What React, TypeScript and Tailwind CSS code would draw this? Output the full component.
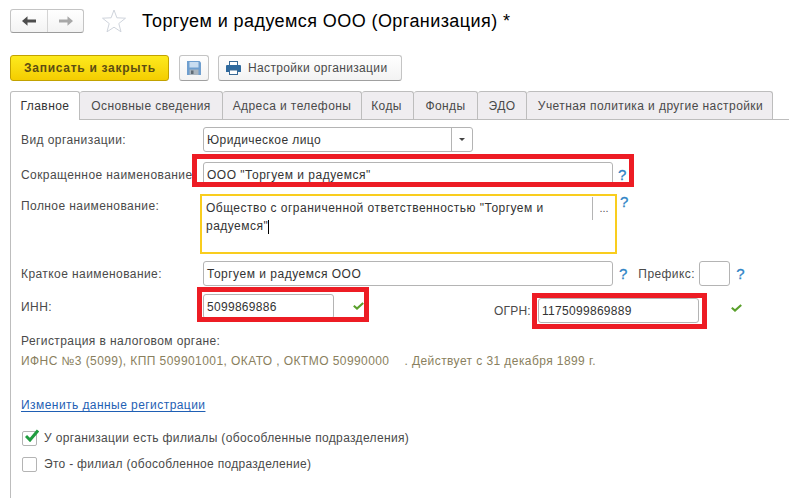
import React from "react";

const Help = ({ className = "" }: { className?: string }) => (
  <span className={"text-[15px] leading-none text-[#2f84c6] [-webkit-text-stroke:0.3px_#2f84c6] " + className}>?</span>
);

const Check = ({ className = "" }: { className?: string }) => (
  <svg width="11" height="8" viewBox="0 0 11 8" className={className}>
    <path d="M0.8 3.8 L4 6.6 L10.2 1" fill="none" stroke="#5aa02c" strokeWidth="2.1" />
  </svg>
);

const Field = ({ className = "", children }: { className?: string; children?: React.ReactNode }) => (
  <div className={"h-[25px] border border-[#b4b4b4] rounded-[3px] bg-white flex items-center pl-[3px] text-[12px] tracking-[0.5px] text-[#333] " + className}>
    {children}
  </div>
);

const Label = ({ className = "", children }: { className?: string; children: React.ReactNode }) => (
  <div className={"w-[182px] shrink-0 whitespace-nowrap text-[12px] tracking-[0.42px] text-[#4a4a4a] " + className}>{children}</div>
);

const tabs = [
  { t: "Основные сведения", w: "w-[143px]", x: "" },
  { t: "Адреса и телефоны", w: "w-[139px]", x: "" },
  { t: "Коды", w: "w-[52px]", x: "pr-[2px]" },
  { t: "Фонды", w: "w-[64px]", x: "" },
  { t: "ЭДО", w: "w-[49px]", x: "" },
  { t: "Учетная политика и другие настройки", w: "w-[246px]", x: "pl-[2px]" },
];

export default function App() {
  return (
    <div className="relative w-[789px] h-[498px] overflow-hidden bg-white font-['Liberation_Sans',Arial,sans-serif]">
      {/* Header */}
      <div className="flex items-center h-[24px] mt-[9px] ml-[10px]">
        <div className="flex w-[74px] h-[24px] border border-[#c4c4c4] border-b-[#9c9c9c] rounded-[3px] bg-gradient-to-b from-white to-[#f3f3f3]">
          <div className="w-[37px] border-r border-[#d4d4d4] flex items-center justify-center">
            <svg width="14" height="10" viewBox="0 0 14 10">
              <path d="M0 5 L5.5 0.3 V3.4 H14 V6.6 H5.5 V9.7 Z" fill="#4d4d4d" />
            </svg>
          </div>
          <div className="flex-1 flex items-center justify-center">
            <svg width="14" height="10" viewBox="0 0 14 10">
              <path d="M14 5 L8.5 0.3 V3.4 H0 V6.6 H8.5 V9.7 Z" fill="#a8a8a8" />
            </svg>
          </div>
        </div>
        <svg width="24" height="24" viewBox="0 0 24 24" className="ml-[18px]">
          <path d="M12 1 L14.9 8.8 L23.5 9.2 L16.8 14.5 L19 22.8 L12 18.2 L5 22.8 L7.2 14.5 L0.5 9.2 L9.1 8.8 Z" fill="none" stroke="#cfd4dc" strokeWidth="1" />
        </svg>
        <div className="ml-[16px] text-[18px] text-black whitespace-nowrap tracking-[0.42px]">Торгуем и радуемся ООО (Организация) *</div>
      </div>

      {/* Toolbar */}
      <div className="flex items-stretch h-[26px] mt-[22px] ml-[10px]">
        <div className="w-[159px] pl-[1px] rounded-[3px] border border-[#c2a200] bg-gradient-to-b from-[#fdea1c] to-[#f4cd00] flex items-center justify-center text-[12px] font-bold tracking-[0.72px] text-[#5c4d12]">
          Записать и закрыть
        </div>
        <div className="ml-[10px] w-[30px] rounded-[3px] border border-[#c4c4c4] border-b-[#a0a0a0] bg-gradient-to-b from-white to-[#f3f3f3] flex items-center justify-center">
          <svg width="14" height="14" viewBox="0 0 14 14">
            <path d="M0 0 H12.5 L14 1.5 V14 H0 Z" fill="#6f9fcf" />
            <rect x="2.5" y="1" width="9" height="5.5" fill="#c9ddf0" />
            <rect x="2.5" y="8.5" width="9" height="5.5" fill="#a9b4bd" />
            <rect x="4" y="9.5" width="2.5" height="3.5" fill="#5f6b75" />
          </svg>
        </div>
        <div className="ml-[9px] w-[184px] rounded-[3px] border border-[#c4c4c4] border-b-[#a0a0a0] bg-gradient-to-b from-white to-[#f3f3f3] flex items-center pl-[7px] text-[12px] tracking-[0.35px] text-[#4a4a4a]">
          <svg width="15" height="14" viewBox="0 0 15 14" className="mr-[7px]">
            <rect x="3.5" y="0.5" width="8" height="5" fill="#fff" stroke="#3a6a96" />
            <path d="M0 5 Q0 4 1 4 H14 Q15 4 15 5 V11 H12 V9 H3 V11 H0 Z" fill="#2f6a9e" />
            <rect x="3.5" y="9" width="8" height="4.5" fill="#fff" stroke="#3a6a96" />
          </svg>
          Настройки организации
        </div>
      </div>

      {/* Tabs */}
      <div className="flex items-end h-[29px] mt-[10px] ml-[10px] border-b border-[#bdbdbd] relative">
        <div className="w-[70px] h-[29px] -mb-px border border-b-0 border-[#bdbdbd] rounded-t-[3px] bg-white flex items-center justify-center text-[12px] tracking-[0.42px] text-[#333]">
          Главное
        </div>
        {tabs.map((x) => (
          <div key={x.t} className={x.w + " " + x.x + " h-[28px] border-r border-t border-[#bdbdbd] rounded-t-[3px] bg-[#efedf0] flex items-center justify-center text-[12px] tracking-[0.42px] text-[#4a4a4a] whitespace-nowrap"}>
            {x.t}
          </div>
        ))}
      </div>

      {/* Form */}
      <div className="ml-[10px] h-[378px] border-l border-[#bdbdbd] pl-[10px] pt-[7px]">
        <div className="flex items-center h-[25px]">
          <Label>Вид организации:</Label>
          <Field className="w-[270px] pr-0 !tracking-[0.42px]">
            <span className="flex-1">Юридическое лицо</span>
            <span className="w-[21px] h-full border-l border-[#b4b4b4] flex items-center justify-center">
              <span className="w-0 h-0 border-x-[3px] border-x-transparent border-t-[3px] border-t-[#444]" />
            </span>
          </Field>
        </div>

        <div className="flex items-center h-[25px] mt-[10px]">
          <Label>Сокращенное наименование</Label>
          <Field className="w-[410px]">ООО "Торгуем и радуемся"</Field>
          <Help className="ml-[5px]" />
        </div>

        <div className="flex items-start h-[59px] mt-[7px]">
          <Label className="mt-[3px]">Полное наименование:</Label>
          <div className="-ml-[3px] w-[417px] h-[60px] border-2 border-[#f9cd1e] flex items-start">
            <div className="flex-1 pl-[4px] pt-[3px] text-[12px] leading-[18px] tracking-[0.47px] text-[#333]">
              Общество с ограниченной ответственностью "Торгуем и<br />
              радуемся"<span className="inline-block w-px h-[14px] bg-black align-middle" />
            </div>
            <div className="w-[23px] h-[23px] mt-[1px] border-l border-[#b4b4b4] flex items-center justify-center text-[11px] text-[#555]">...</div>
          </div>
          <Help className="ml-[3px]" />
        </div>

        <div className="flex items-center h-[25px] mt-[8px]">
          <Label>Краткое наименование:</Label>
          <Field className="w-[410px]">Торгуем и радуемся ООО</Field>
          <Help className="ml-[6px]" />
          <span className="ml-[11px] w-[61px] shrink-0 text-[12px] tracking-[0.42px] text-[#4a4a4a]">Префикс:</span>
          <Field className="w-[31px]" />
          <Help className="ml-[6px]" />
        </div>

        <div className="flex items-start h-[28px] mt-[8px]">
          <Label className="mt-[4px]">ИНН:</Label>
          <Field className="w-[131px] !tracking-[0.3px]">5099869886</Field>
          <Check className="ml-[19px] mt-[8px]" />
          <span className="ml-[130px] w-[44px] mt-[8px] shrink-0 text-[12px] tracking-[0.2px] text-[#4a4a4a]">ОГРН:</span>
          <Field className="w-[161px] mt-[4px] !tracking-[0.3px]">1175099869889</Field>
          <Check className="ml-[32px] mt-[10px]" />
        </div>

        <div className="mt-[12px] text-[12px] leading-[14px] tracking-[0.42px] text-[#4a4a4a]">Регистрация в налоговом органе:</div>
        <div className="mt-[6px] text-[12px] leading-[14px] tracking-[0.42px] text-[#8a7f5e] whitespace-nowrap">
          ИФНС №3 (5099), КПП 509901001, ОКАТО , ОКТМО 50990000 &nbsp;&nbsp; . Действует с 31 декабря 1899 г.
        </div>

        <a className="block mt-[30px] text-[12px] leading-[15px] tracking-[0.44px] text-[#1f5fb4] underline underline-offset-2 w-fit">Изменить данные регистрации</a>

        <div className="flex items-center h-[16px] mt-[17px] text-[12px] tracking-[0.35px] text-[#4a4a4a] relative">
          <span className="w-[15px] h-[15px] border border-[#b4b4b4] rounded-[2px] mr-[6px] ml-px" />
          <span className="ml-px">У организации есть филиалы (обособленные подразделения)</span>
          <svg width="14" height="13" viewBox="0 0 14 13" className="absolute left-[4px] -top-[1px]">
            <path d="M1 7 L5 11 L13 1.5" fill="none" stroke="#1f9c3f" strokeWidth="3" />
          </svg>
        </div>
        <div className="flex items-center h-[16px] mt-[10px] text-[12px] tracking-[0.3px] text-[#4a4a4a]">
          <span className="w-[15px] h-[15px] border border-[#b4b4b4] rounded-[2px] mr-[6px] ml-px" />
          <span className="ml-px">Это - филиал (обособленное подразделение)</span>
        </div>
      </div>

      {/* Red highlight frames */}
      <div className="absolute left-[192px] top-[154px] w-[442px] h-[33px] border-[5px] border-[#ed1c24] pointer-events-none" />
      <div className="absolute left-[197px] top-[287px] w-[172px] h-[35px] border-[5px] border-[#ed1c24] pointer-events-none" />
      <div className="absolute left-[532px] top-[293px] w-[175px] h-[36px] border-[5px] border-[#ed1c24] pointer-events-none" />
    </div>
  );
}
